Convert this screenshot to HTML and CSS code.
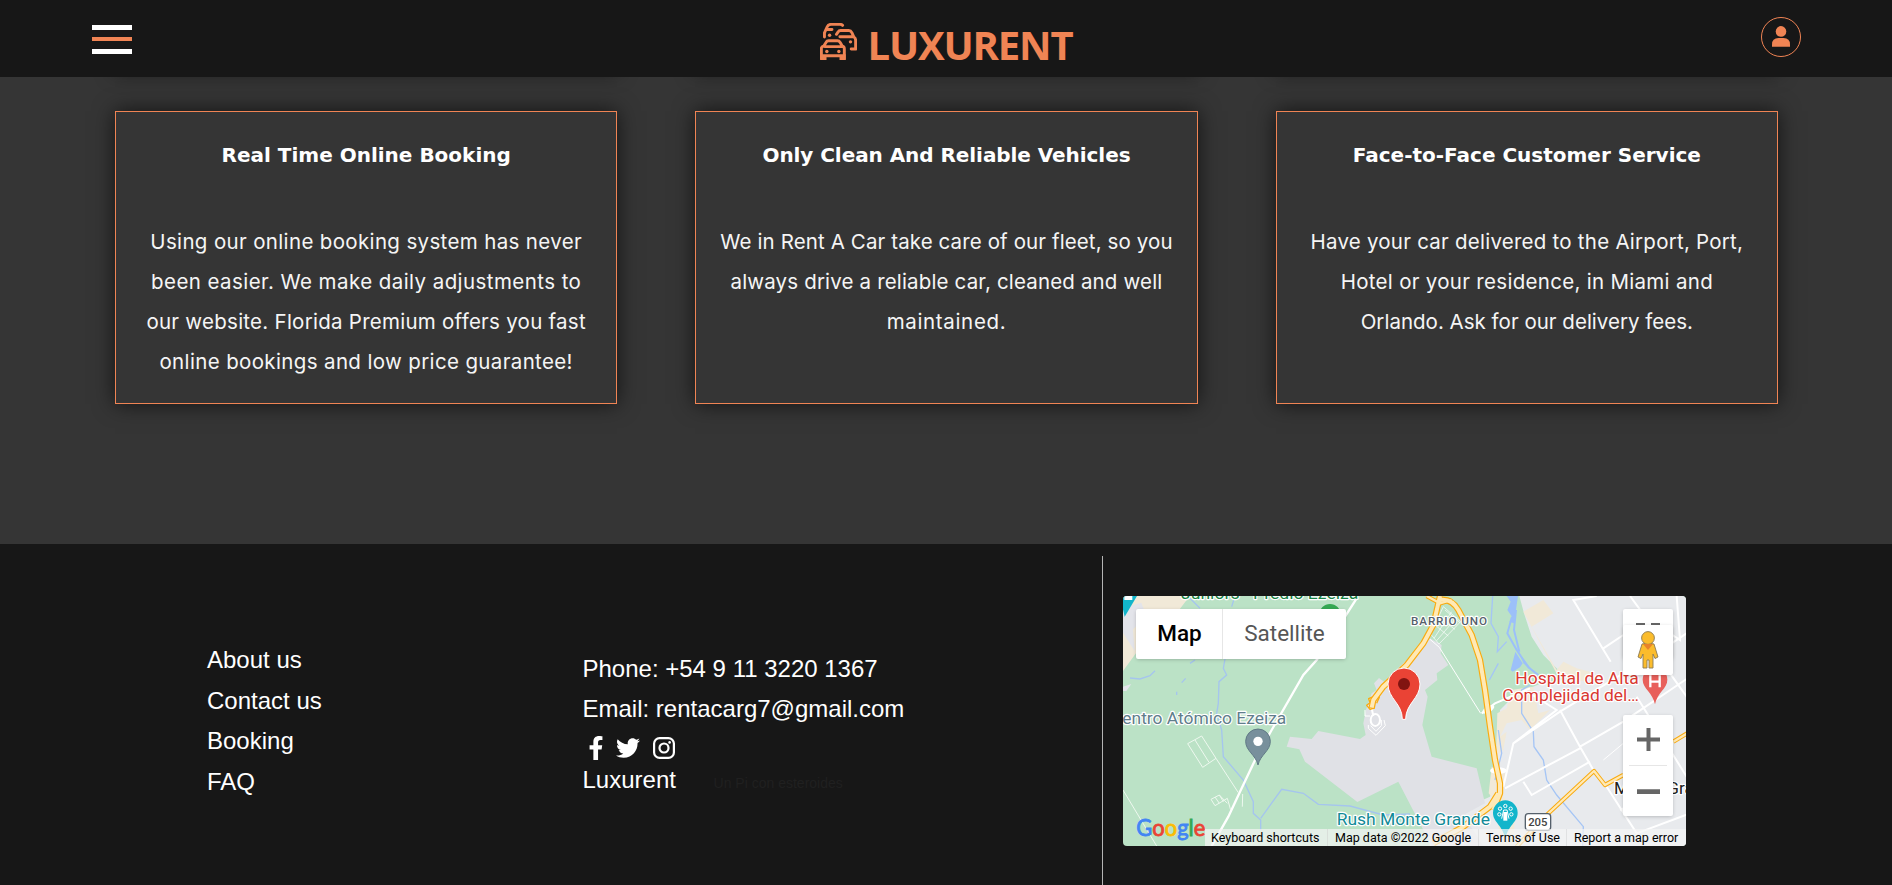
FILE: index.html
```html
<!DOCTYPE html>
<html lang="en">
<head>
<meta charset="utf-8">
<title>Luxurent</title>
<link rel="stylesheet" href="styles.css">
</head>
<body>
<header class="header">
  <button class="burger" aria-label="Menu"><span></span><span class="mid"></span><span></span></button>
  <a class="brand">
    <svg class="brand-icon" viewBox="15 18 108 108" fill="none" stroke="#f08454" stroke-width="8.500" stroke-linecap="round" stroke-linejoin="round">
      <path d="M28 59V47L36 29Q39 22 47 22H74Q79 22 81 25M36 37H50"/>
      <path d="M63 51L68 44Q70 40 75 40H99Q105 40 108 46L114 59Q119 62 119 69V94H106M73 58H110"/>
      <path d="M19 122V92Q19 87 26 85L33 74Q35 70 40 70H66Q71 70 74 75L80 85Q86 87 86 93V122M29 87H78"/>
      <g fill="#f08454" stroke="none"><circle cx="35" cy="101" r="5"/><circle cx="70" cy="101" r="5"/><circle cx="104" cy="73" r="5"/><circle cx="43" cy="54" r="5"/><path d="M16 109H90V126H72V118H34V126H16Z"/></g>
    </svg>
    <span class="brand-name">LUXURENT</span>
  </a>
  <a class="account" aria-label="Account">
    <svg viewBox="0 0 18 21" fill="#f08454"><circle cx="9" cy="5.4" r="5.3"/><path d="M0 20.7V18.5Q0 12 6.5 12H11.5Q18 12 18 18.5V20.7Z"/></svg>
  </a>
</header>

<main class="features">
  <div class="row prev"><div></div><div></div><div></div></div>
  <div class="row">
    <article class="card">
      <h3>Real Time Online Booking</h3>
      <p><span class="a1">Using our online booking system has never</span><span class="a2">been easier. We make daily adjustments to</span><span class="a3">our website. Florida Premium offers you fast</span><span class="a4">online bookings and low price guarantee!</span></p>
    </article>
    <article class="card">
      <h3 class="tight">Only Clean And Reliable Vehicles</h3>
      <p><span class="b1">We in Rent A Car take care of our fleet, so you</span><span class="b2">always drive a reliable car, cleaned and well</span><span class="b3">maintained.</span></p>
    </article>
    <article class="card">
      <h3>Face-to-Face Customer Service</h3>
      <p><span class="c1">Have your car delivered to the Airport, Port,</span><span class="c2">Hotel or your residence, in Miami and</span><span class="c3">Orlando. Ask for our delivery fees.</span></p>
    </article>
  </div>
</main>

<footer class="footer">
  <div class="info">
    <nav class="links"><a>About us</a><a>Contact us</a><a>Booking</a><a>FAQ</a></nav>
    <div class="contact">
      <p>Phone: +54 9 11 3220 1367</p>
      <p>Email: rentacarg7@gmail.com</p>
      <div class="social">
        <svg width="24" height="24" viewBox="0 0 320 512" fill="#fff"><path d="M279 288l14-93h-89v-60c0-25 12-50 52-50h41V7s-37-7-72-7c-73 0-121 44-121 125v70H23v93h81v224h100V288z"/></svg>
        <svg width="24" height="24" viewBox="0 0 512 512" fill="#fff"><path d="M459.4 151.7c.3 4.5.3 9.100.3 13.600 0 138.700-105.600 298.600-298.600 298.600-59.500 0-114.700-17.200-161.100-47.100 8.400 1 16.600 1.300 25.300 1.300 49.100 0 94.200-16.600 130.300-44.800-46.100-1-84.800-31.200-98.100-72.800 6.500 1 13 1.600 19.800 1.600 9.400 0 18.800-1.300 27.600-3.600-48.100-9.700-84.100-52-84.100-103v-1.300c14 7.800 30.200 12.700 47.400 13.300-28.300-18.800-46.800-51-46.800-87.400 0-19.500 5.200-37.400 14.300-53 51.700 63.700 129.300 105.300 216.400 109.800-1.600-7.800-2.600-15.900-2.600-24 0-57.800 46.800-104.900 104.900-104.900 30.200 0 57.500 12.700 76.700 33.100 23.700-4.500 46.500-13.300 66.600-25.300-7.800 24.400-24.400 44.800-46.100 57.800 21.100-2.300 41.600-8.100 60.400-16.200-14.300 20.800-32.200 39.300-52.600 54.300z"/></svg>
        <svg width="22" height="22" viewBox="0 0 22 22" fill="none" stroke="#fff" stroke-width="2.200"><rect x="1.100" y="1.100" width="19.800" height="19.800" rx="5.500"/><circle cx="11" cy="11" r="4.500"/><circle cx="16.600" cy="5.400" r="1.300" fill="#fff" stroke="none"/></svg>
      </div>
      <p class="sign">Luxurent <small>Un Pi con esteroides</small></p>
    </div>
  </div>
  <div class="map-side">
    <div class="map">
      <svg class="canvas" viewBox="0 0 1689 750" font-family="Roboto, sans-serif">
        <rect width="1689" height="750" fill="#bbe2c6"/>
        <!-- built-up area -->
        <g transform="translate(801 -48)">
          <path d="M388 48L402 100L425 170L460 225L505 270L520 300L455 310L380 340L330 390L322 500L320 600L300 650L210 690L110 740L120 800H900V48Z" fill="#e8eaed"/>
          <path d="M400 95L460 60L490 100L425 140L500 270L520 245L560 265L600 275L590 305L505 290Z" fill="#f1e9d8"/>
          <path d="M322 400L350 385L365 330L430 320L445 400L480 390L420 450L395 420L350 430L330 470L350 455L340 510L318 525ZM296 640L305 560L345 580L340 650L375 690L370 800H330L320 670Z" fill="#f1e9d8"/>
          <path d="M350 48L362 65L352 90L366 110L358 125L372 130L384 48ZM378 195L400 250L440 285L420 262L392 225ZM362 270L376 215L398 250L390 262L368 275Z" fill="#9cc0f9"/>
          <path d="M366 110L352 160L380 210L415 262L445 285M378 90L372 150L388 215" fill="none" stroke="#9cc0f9" stroke-width="6"/>
          <path d="M308 48L303 130L325 170L322 215L350 185M325 250L298 300M420 315L395 330V400L430 455L432 500L460 540L470 600L500 645L580 740L578 800M325 450L335 520L315 600" fill="none" stroke="#a5c5f5" stroke-width="4"/>
        </g>
        <path d="M0 0H200L170 40L90 75L40 170L0 225Z" fill="#f1e9d8"/>
        <path d="M0 35L55 20L70 60L30 100L35 165L0 110ZM0 272L25 264L10 285H0Z" fill="#e3e4ea"/>
        <path d="M0 0H42L5 62L0 40Z" fill="#12b5cb"/><path d="M4 0H28V12H4Z" fill="#fff"/>
        <!-- airport grounds -->
        <g transform="translate(381 -18)">
          <path d="M110 470L120 440L185 447L205 423L330 447L347 435L340 400L348 360L365 310L380 300L372 280L387 264L402 275L470 210L540 145L575 165L572 190L595 225L560 250L562 270L525 300L533 320L517 405L545 500L680 535L705 640L640 675L700 768H545L445 575L322 636L165 515L148 478Z" fill="#e0e1e6"/>
          <g fill="none" stroke="#fff" stroke-width="3"><path d="M365 355L370 378" stroke-width="6"/><path d="M345 360V378H360M355 405V415L378 436L406 407L402 390M362 407L378 424L394 407V390"/><ellipse cx="376" cy="390" rx="14" ry="18" stroke-width="6"/><path d="M540 148L568 172L692 370"/>
          <path d="M545 125L580 50L632 95L567 162L540 130M555 105L595 138M565 82L615 118M605 65L552 145M620 82L560 152M585 60L630 98" stroke-width="2.500" opacity=".8"/></g>
        </g>
        <!-- streams and minor roads -->
        <g transform="translate(-99 -168)" fill="none">
          <path d="M300 175L330 205M435 168L425 200M405 357L400 385L410 405L387 425L385 490L380 520L395 570L400 650L460 720L490 785V820L512 840L512 870M512 835L575 748L640 760L685 793L780 798L880 825L960 822M120 414L150 417L180 407L195 392M275 428L287 415M260 455V465M300 370L315 360" stroke="#a5c5ee" stroke-width="4"/>
          <path d="M800 175L765 230L680 360L640 405L545 570L500 650L450 755L415 830L365 918" stroke="#fff" stroke-width="7"/>
          <path d="M293 611L335 588L378 655L338 682ZM315 600L357 667M378 655L445 758M99 750L200 918M363 778L388 765L412 790M363 778L375 797L412 775L422 810M375 771L388 790M388 765L400 785M458 762L457 800" stroke="#eef8ef" stroke-width="3"/>
        </g>
        <g transform="translate(801 -48)" fill="none">
          <path d="M620 48L550 60L662 245M420 340L500 390L370 490L355 555L340 620M640 205L700 165L800 95M720 48L780 130L810 140L870 180L860 48M370 490L510 395L700 280M510 390L570 500L610 570M570 500L700 425L900 290M400 605L425 645L600 545M345 625L570 505M650 620L740 760L900 700M690 690L850 620M740 350L890 590M275 400L315 370L420 325M840 280L890 350M830 200L890 160" stroke="#fff" stroke-width="6"/>
          <path d="M640 540L700 490" stroke="#fff" stroke-width="3"/>
          <ellipse cx="295" cy="388" rx="20" ry="9" fill="#fff" transform="rotate(-30 295 388)"/><ellipse cx="325" cy="572" rx="25" ry="10" fill="#fff"/>
        </g>
        <!-- highways -->
        <g transform="translate(801 -48)" fill="none" stroke-linejoin="round">
          <g stroke="#f9ab10"><path d="M130 790L220 740L300 680L325 640M-55 385L-50 360L-20 320L50 255L100 190L130 135L150 48M150 60Q185 55 205 90L245 165L270 240L285 330L300 440L315 540L330 610V640L310 690" stroke-width="19"/><path d="M110 48L150 70L185 60M380 800L470 705L612 573L645 615L700 585M850 485L900 455" stroke-width="13"/><path d="M-50 350L-64 356L-60 368L-70 376L-60 388L-48 384M-40 370L-32 352L-35 340" stroke-width="4"/></g>
          <g stroke="#ffe9b5"><path d="M130 790L220 740L300 680L325 640M-55 383L-50 360L-20 320L50 255L100 190L130 135L150 48M150 60Q185 55 205 90L245 165L270 240L285 330L300 440L315 540L330 610V640L310 690" stroke-width="12"/><path d="M110 48L150 70L185 60M380 800L470 705L612 573L645 615L700 585M850 485L900 455" stroke-width="7"/></g>
        </g>
        <!-- labels and markers -->
        <g stroke="#fff" stroke-width="7" stroke-linejoin="round" paint-order="stroke" font-size="51">
          <text x="174" y="9" fill="#178345" textLength="532" lengthAdjust="spacingAndGlyphs">Juniors - Predio Ezeiza</text>
          <text x="-36" y="383" fill="#607d8b" textLength="526" lengthAdjust="spacingAndGlyphs">Centro Atómico Ezeiza</text>
          <text x="641" y="687" fill="#128a97" textLength="460" lengthAdjust="spacingAndGlyphs">Rush Monte Grande</text>
          <text x="864" y="87" fill="#55606b" font-size="35" font-weight="500" textLength="228">BARRIO UNO</text>
          <text x="1177" y="263" fill="#d93831" textLength="370" lengthAdjust="spacingAndGlyphs">Hospital de Alta</text>
          <text x="1138" y="316" fill="#d93831" textLength="410" lengthAdjust="spacingAndGlyphs">Complejidad del…</text>
          <text x="1473" y="593" fill="#222" font-size="50" textLength="324" lengthAdjust="spacingAndGlyphs">Monte Grande</text>
        </g>
        <circle cx="621" cy="56" r="32" fill="#34a853"/>
        <g><path d="M405 507C398 476 368 465 368 436A37 37 0 0 1 442 436C442 465 412 476 405 507Z" fill="#78909c" stroke="#607985" stroke-width="3"/><circle cx="405" cy="436" r="14" fill="#fff"/></g>
        <path d="M838 370C838 322 795 308 795 264A48 48 0 0 1 891 264C891 308 848 322 848 370Z" fill="#ea4335" stroke="#fff" stroke-width="3"/><circle cx="843" cy="264" r="18" fill="#811411"/>
        <path d="M1147 730C1140 687 1110 680 1110 650A37 37 0 0 1 1184 650C1184 680 1154 687 1147 730Z" fill="#12b5cb"/>
        <g fill="none" stroke="#fff" stroke-width="3"><circle cx="1131" cy="638" r="5"/><circle cx="1147" cy="630" r="5"/><circle cx="1163" cy="638" r="5"/><circle cx="1129" cy="655" r="5"/><circle cx="1165" cy="655" r="5"/><path d="M1136 668L1142 642H1152L1158 668"/></g><rect x="1141" y="648" width="12" height="26" fill="#fff"/>
        <path d="M1596 325C1590 290 1559 278 1559 251A37 37 0 0 1 1633 251C1633 278 1602 290 1596 325Z" fill="#e8605b"/><path d="M1582 238V274M1610 238V274M1582 257H1610" stroke="#fff" stroke-width="7"/>
        <rect x="1207" y="653" width="76" height="50" rx="9" fill="#fff" stroke="#55606b" stroke-width="4"/><text x="1216" y="691" font-size="34" font-weight="500" fill="#444" textLength="57">205</text>
        <text x="40" y="720" font-family="Lato, sans-serif" font-size="68" font-weight="400" stroke-width="2.500" textLength="207" lengthAdjust="spacingAndGlyphs"><tspan fill="#4285f4" stroke="#4285f4">G</tspan><tspan fill="#ea4335" stroke="#ea4335">o</tspan><tspan fill="#fbbc05" stroke="#fbbc05">o</tspan><tspan fill="#4285f4" stroke="#4285f4">g</tspan><tspan fill="#34a853" stroke="#34a853">l</tspan><tspan fill="#ea4335" stroke="#ea4335">e</tspan></text>
      </svg>
      <div class="types"><span class="on">Map</span><span>Satellite</span></div>
      <div class="full"><i></i><i></i></div>
      <div class="pegman"><svg width="22" height="38" viewBox="0 0 22 38" fill="#fbbc2c" stroke="#8b7a55" stroke-width=".9"><path d="M5 13Q11 11 17 13L21 26L18 27.500L16 23V37H12V29H10V37H6V23L4 27.500L1 26Z"/><circle cx="11" cy="7" r="6.400"/><path d="M6 13H16L11 19Z" fill="#e8832a" stroke="none"/></svg></div>
      <div class="zoom"><svg width="23" height="23" viewBox="0 0 23 23" fill="#666"><path d="M9.500 0H13.500V9.500H23V13.500H13.500V23H9.500V13.500H0V9.500H9.500Z"/></svg><hr><svg width="23" height="23" viewBox="0 0 23 23" fill="#666"><path d="M0 9.300H23V14H0Z"/></svg></div>
      <div class="legal"><span class="l1">Keyboard shortcuts</span><span class="l2">Map data ©2022 Google</span><span class="l3">Terms of Use</span><span class="l4">Report a map error</span></div>
    </div>
  </div>
</footer>
</body>
</html>
```
FILE: styles.css
```css
* { box-sizing: border-box; }
html, body { margin: 0; height: 885px; overflow: hidden; }
body { background: #353535; color: #fff; font-family: "Liberation Sans", Arial, sans-serif; display: flex; flex-direction: column; }
.header { height: 77px; flex: none; background: #171717; display: grid; grid-template-columns: 1fr auto 1fr; padding: 0 91px 0 92px; }
.burger { width: 40px; height: 29px; margin: 25px 0 0; padding: 0; border: 0; background: none; display: flex; flex-direction: column; }
.burger span { display: block; width: 100%; height: 5px; background: #fff; }
.burger .mid { height: 4px; margin: 7px 0 8px; background: #f08454; }
.brand { display: flex; align-items: flex-start; gap: 10px; color: #f08454; }
.brand-icon { width: 37px; height: 37px; margin-top: 23px; }
.brand-name { font: 700 40px/54px "Open Sans", sans-serif; letter-spacing: -1.150px; margin-top: 18px; }
.account { justify-self: end; width: 40px; height: 40px; margin-top: 17px; border: 1px solid #f08454; border-radius: 50%; display: flex; justify-content: center; padding-top: 8px; }
.account svg { width: 18px; height: 21px; }

.features { height: 467px; flex: none; overflow: hidden; padding: 0 114px 0 115px; }
.row { display: grid; grid-template-columns: repeat(3, 1fr); gap: 78px; }
.prev { margin: -36px 0 40px; }
.prev div { height: 30px; box-shadow: 0 0 20px rgba(0,0,0,.65); }
.card { height: 293px; border: 1px solid #f08454; background: #353535; box-shadow: 0 0 20px rgba(0,0,0,.65); text-align: center; padding-top: 30px; }
.card h3 { margin: 0; font: 700 20px/26px "DejaVu Sans", Verdana, sans-serif; white-space: nowrap; }
.card .tight { letter-spacing: -.06px; }
.card p { margin: 54px 0 0; font: 400 20.500px/40px "Inter", sans-serif; color: #f5f5f5; }
.card p span { display: block; white-space: nowrap; }
.a1 { letter-spacing: .35px; }
.a2 { letter-spacing: .43px; }
.a3 { letter-spacing: .26px; }
.a4 { letter-spacing: .36px; }
.b1 { letter-spacing: .11px; }
.b2 { letter-spacing: .16px; }
.b3 { letter-spacing: .66px; }
.c1 { letter-spacing: .24px; }
.c2 { letter-spacing: .3px; }
.c3 { letter-spacing: .01px; }

.footer { flex: 1; background: #171717; display: flex; padding-top: 12px; }
.info { width: 1102px; display: flex; padding: 84px 0 0 207px; font-size: 24px; }
.links { width: 375.500px; display: flex; flex-direction: column; }
.links a { line-height: 40.500px; }
.contact { padding-top: 9px; }
.contact p { margin: 0; line-height: 40px; white-space: nowrap; }
.social { display: flex; align-items: center; height: 38px; gap: 8px; padding-left: 1px; }
.social svg:nth-child(3) { margin-left: 5px; }
.contact .sign { line-height: 26px; }
.sign small { font-size: 14px; color: #202020; margin-left: 31px; }
.map-side { border-left: 1px solid #b5b5b5; padding: 40px 0 0 20px; }
.map { position: relative; width: 563px; height: 250px; border-radius: 4px; overflow: hidden; font-family: Roboto, sans-serif; }
.canvas { display: block; width: 563px; height: 250px; }
.types, .full, .pegman, .zoom { position: absolute; background: #fff; border-radius: 2px; box-shadow: 0 1px 4px -1px rgba(0,0,0,.3); }
.types { left: 13px; top: 13px; width: 210px; height: 50px; display: flex; font-size: 22.500px; line-height: 49px; color: #565656; }
.types span { flex: 1; text-align: center; }
.types .on { flex: 0 0 87px; padding-left: 1px; color: #000; font-weight: 500; border-right: 1px solid #e6e6e6; }
.full { right: 13px; top: 13px; width: 50px; height: 50px; padding: 14px 13px; display: flex; justify-content: space-between; }
.full i { width: 9px; height: 3px; background: #666; }
.pegman { right: 13px; top: 29px; width: 50px; height: 50px; display: flex; align-items: center; justify-content: center; }
.zoom { right: 13px; top: 119px; width: 50px; height: 101px; display: flex; flex-direction: column; align-items: center; justify-content: space-between; padding: 13px 0; }
.zoom hr { width: 38px; height: 1px; border: 0; margin: 0; background: #e6e6e6; }
.legal { position: absolute; right: 0; bottom: 0; width: 481px; height: 17px; display: flex; background: rgba(245,245,245,.7); color: #000; font-size: 12.500px; line-height: 17px; white-space: nowrap; }
.legal span { padding-left: 7px; border-left: 1px solid rgba(200,200,200,.4); }
.legal .l1 { width: 122px; padding-left: 6px; border: 0; }
.l2 { width: 151px; }
.l3 { width: 88px; }
```
